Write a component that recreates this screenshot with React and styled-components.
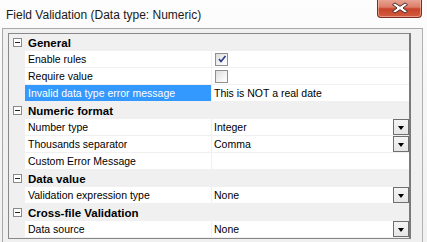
import React from "react";
import styled, { createGlobalStyle } from "styled-components";

const sections = [
  {
    title: "General",
    rows: [
      { label: "Enable rules", kind: "check", checked: true },
      { label: "Require value", kind: "check", checked: false },
      { label: "Invalid data type error message", value: "This is NOT a real date", selected: true },
    ],
  },
  {
    title: "Numeric format",
    rows: [
      { label: "Number type", value: "Integer", kind: "drop" },
      { label: "Thousands separator", value: "Comma", kind: "drop" },
      { label: "Custom Error Message", value: "" },
    ],
  },
  {
    title: "Data value",
    rows: [{ label: "Validation expression type", value: "None", kind: "drop" }],
  },
  {
    title: "Cross-file Validation",
    rows: [{ label: "Data source", value: "None", kind: "drop" }],
  },
];

const App = () => {
  return (
    <>
      <GlobalStyle />
      <Window>
        <TitleBar>
          <Title>Field Validation (Data type: Numeric)</Title>
          <CloseButton>
            <svg width="20" height="12" viewBox="0 0 20 12">
              <path
                d="M5 1 L10 4.3 L15 1 L17.5 2.6 L13 6 L17.5 9.4 L15 11 L10 7.7 L5 11 L2.5 9.4 L7 6 L2.5 2.6 Z"
                fill="#fff"
                stroke="#4a2a28"
                strokeWidth="1"
                strokeLinejoin="round"
              />
            </svg>
          </CloseButton>
        </TitleBar>
        <Frame>
          <Grid>
            {sections.map((s) => (
              <React.Fragment key={s.title}>
                <CategoryRow>
                  <Gutter>
                    <Minus />
                  </Gutter>
                  <CategoryTitle>{s.title}</CategoryTitle>
                </CategoryRow>
                {s.rows.map((r) => (
                  <Row key={r.label}>
                    <Gutter />
                    <Label $selected={r.selected}>{r.label}</Label>
                    <Value>
                      {r.kind === "check" ? (
                        <Check>
                          {r.checked && (
                            <svg width="10" height="10" viewBox="0 0 10 10">
                              <path d="M2 5 L4 7.5 L8.5 2" stroke="#2a3a8a" strokeWidth="1.6" fill="none" />
                            </svg>
                          )}
                        </Check>
                      ) : (
                        <ValueText>{r.value}</ValueText>
                      )}
                      {r.kind === "drop" && (
                        <DropButton>
                          <Arrow />
                        </DropButton>
                      )}
                    </Value>
                  </Row>
                ))}
              </React.Fragment>
            ))}
          </Grid>
        </Frame>
      </Window>
    </>
  );
};
export default App;

const GlobalStyle = createGlobalStyle`
  html, body {
    margin: 0;
    padding: 0;
    background: #f0f0f0;
    overflow: hidden;
  }
`;
const Window = styled.div`
  width: 427px;
  height: 242px;
  overflow: hidden;
  background: linear-gradient(180deg, #fdfdfd 0%, #f6f6f6 40%, #f1f1f1 100%);
  font-family: "Liberation Sans", Arial, sans-serif;
`;
const TitleBar = styled.div`
  height: 28px;
  display: flex;
  align-items: flex-start;
  justify-content: space-between;
  padding-left: 6px;
  padding-right: 5px;
`;
const Title = styled.div`
  font-size: 12px;
  color: #1a1a1a;
  margin-top: 8px;
`;
const CloseButton = styled.div`
  width: 43px;
  height: 18px;
  margin-top: -1px;
  border: 1px solid #7a2d25;
  border-top: none;
  border-radius: 0 0 4px 4px;
  background: linear-gradient(180deg, #e9a89a 0%, #dd7e68 45%, #c8432b 55%, #d35c3e 100%);
  display: flex;
  align-items: center;
  justify-content: center;
  box-shadow: inset 0 0 0 1px rgba(255, 210, 200, 0.5);
`;
const Frame = styled.div`
  margin-left: 2px;
  width: 421px;
  height: 220px;
  border: 1px solid #a8a8a8;
  border-right-color: #b0b0b0;
  background: #f0f0f0;
  padding: 4px 0 0 5px;
  box-sizing: border-box;
`;
const Grid = styled.div`
  width: 403px;
  border: 1px solid #888;
  border-right: 2px solid #7a7a7a;
  background: #f0f0f0;
  box-sizing: border-box;
  font-size: 10.5px;
  color: #000;
`;
const CategoryRow = styled.div`
  display: flex;
  height: 17px;
  align-items: center;
  background: #f0f0f0;
`;
const Gutter = styled.div`
  width: 16px;
  flex: none;
  display: flex;
  align-items: center;
  justify-content: center;
  align-self: stretch;
  background: #f0f0f0;
`;
const Minus = styled.div`
  width: 7px;
  height: 7px;
  border: 1px solid #8a8a8a;
  background: #fff;
  position: relative;
  margin-left: 1px;
  &::after {
    content: "";
    position: absolute;
    left: 1px;
    top: 3px;
    width: 5px;
    height: 1px;
    background: #222;
  }
`;
const CategoryTitle = styled.div`
  font-weight: bold;
  padding-left: 3px;
  font-size: 11.5px;
`;
const Row = styled.div`
  display: flex;
  height: 17px;
`;
const Label = styled.div`
  width: 187px;
  flex: none;
  padding-left: 3px;
  box-sizing: border-box;
  display: flex;
  align-items: center;
  background: ${(p) => (p.$selected ? "#3399ff" : "#fff")};
  color: ${(p) => (p.$selected ? "#fff" : "#000")};
  border-bottom: 1px solid #f0f0f0;
  border-right: 1px solid #f0f0f0;
`;
const Value = styled.div`
  flex: 1;
  display: flex;
  align-items: center;
  background: #fff;
  border-bottom: 1px solid #f0f0f0;
  padding-left: 2px;
  position: relative;
`;
const ValueText = styled.span`
  color: #000;
`;
const Check = styled.div`
  width: 11px;
  height: 11px;
  border: 1px solid #8f8f8f;
  background: linear-gradient(135deg, #dcdcdc 0%, #f4f4f4 60%, #fff 100%);
  display: flex;
  align-items: center;
  justify-content: center;
  margin-left: 1px;
`;
const DropButton = styled.div`
  position: absolute;
  right: 0;
  top: 0;
  width: 14px;
  height: 14px;
  border: 1px solid #6f6f6f;
  background: linear-gradient(180deg, #f4f4f4 0%, #e6e6e6 100%);
  display: flex;
  align-items: center;
  justify-content: center;
`;
const Arrow = styled.div`
  width: 0;
  height: 0;
  border-left: 3.5px solid transparent;
  border-right: 3.5px solid transparent;
  border-top: 4px solid #000;
  margin-top: 2px;
`;
